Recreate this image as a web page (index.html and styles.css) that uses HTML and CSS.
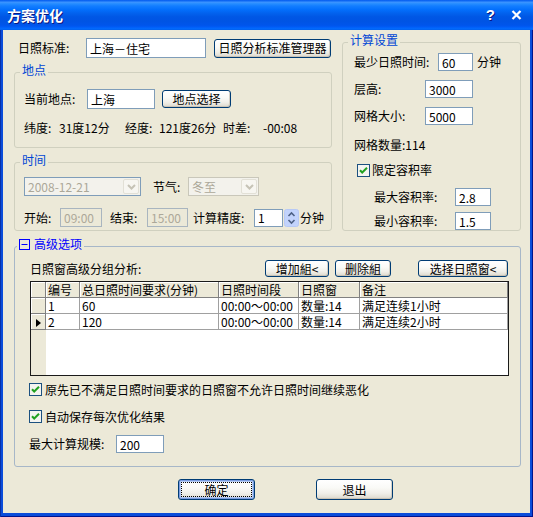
FILE: index.html
```html
<!DOCTYPE html>
<html lang="zh-CN">
<head>
<meta charset="utf-8">
<title>方案优化</title>
<link rel="stylesheet" href="styles.css">
</head>
<body>
<div class="window">
  <div class="titlebar">
    <span class="title">方案优化</span>
    <span class="tb-help">?</span>
    <svg class="tb-close" width="11" height="10" viewBox="0 0 11 10"><path d="M1.5 1L9.5 9M9.5 1L1.5 9" stroke="#fff" stroke-width="2.2" fill="none"/></svg>
  </div>
  <div class="client">
    <div class="top">
      <div class="leftcol">
        <div class="row std-row">
          <span class="lbl w68">日照标准:</span>
          <input class="tb w120 h20" type="text" value="上海－住宅">
          <button class="btn std-btn">日照分析标准管理器</button>
        </div>
        <fieldset class="grp loc">
          <legend>地点</legend>
          <div class="row h20">
            <span class="lbl w63">当前地点:</span>
            <input class="tb w68 h20" type="text" value="上海">
            <button class="btn loc-btn">地点选择</button>
          </div>
          <div class="row coords">
            <span class="w35">纬度:</span>
            <span class="w66">31度12分</span>
            <span class="w34">经度:</span>
            <span class="w64">121度26分</span>
            <span class="w40">时差:</span>
            <span>-00:08</span>
          </div>
        </fieldset>
        <fieldset class="grp time">
          <legend>时间</legend>
          <div class="row h19">
            <div class="combo c1">
              <span class="cval">2008-12-21</span>
              <span class="drop"><svg width="9" height="6" viewBox="0 0 9 6"><path d="M1 1L4.5 4.5L8 1" stroke="#C6C3B6" stroke-width="2" fill="none"/></svg></span>
            </div>
            <span class="lbl jq">节气:</span>
            <div class="combo c2">
              <span class="cval">冬至</span>
              <span class="drop"><svg width="9" height="6" viewBox="0 0 9 6"><path d="M1 1L4.5 4.5L8 1" stroke="#C6C3B6" stroke-width="2" fill="none"/></svg></span>
            </div>
          </div>
          <div class="row h19 trow">
            <span class="lbl w36">开始:</span>
            <input class="tb dis w42 h19" type="text" value="09:00" disabled>
            <span class="lbl w37 ml8">结束:</span>
            <input class="tb dis w41 h19" type="text" value="15:00" disabled>
            <span class="lbl w61 ml5">计算精度:</span>
            <input class="tb w29 h18" type="text" value="1">
            <svg class="spin" width="15" height="18" viewBox="0 0 15 18"><rect x="0.5" y="0.5" width="14" height="17" rx="2" fill="#C2D3FC" stroke="#B7C9F5"/><path d="M4.5 7L7.5 4L10.5 7" stroke="#4D6185" stroke-width="1.6" fill="none"/><path d="M4.5 11L7.5 14L10.5 11" stroke="#4D6185" stroke-width="1.6" fill="none"/></svg>
            <span class="unit">分钟</span>
          </div>
        </fieldset>
      </div>
      <fieldset class="grp calc">
        <legend>计算设置</legend>
        <div class="row h18">
          <span class="lbl w84">最少日照时间:</span>
          <input class="tb w35 h18" type="text" value="60">
          <span class="ml4">分钟</span>
        </div>
        <div class="row h18 mt9">
          <span class="lbl w71">层高:</span>
          <input class="tb w48 h18" type="text" value="3000">
        </div>
        <div class="row h18 mt9">
          <span class="lbl w71">网格大小:</span>
          <input class="tb w48 h18" type="text" value="5000">
        </div>
        <div class="row h14 mt13">网格数量:114</div>
        <div class="row h14 mt11 chkrow">
          <svg class="chk" width="13" height="13" viewBox="0 0 13 13"><rect x="0.5" y="0.5" width="12" height="12" fill="#F4F4F0" stroke="#1C5180"/><path d="M3 6.2L5.2 8.5L10 3.8" stroke="#21A121" stroke-width="2" fill="none"/></svg>
          <span class="chklbl">限定容积率</span>
        </div>
        <div class="row h18 mt11 ratio">
          <span class="lbl w81">最大容积率:</span>
          <input class="tb w36 h18" type="text" value="2.8">
        </div>
        <div class="row h18 mt6 ratio">
          <span class="lbl w81">最小容积率:</span>
          <input class="tb w36 h18" type="text" value="1.5">
        </div>
      </fieldset>
    </div>
    <fieldset class="grp adv">
      <legend><svg class="collapse" width="11" height="11" viewBox="0 0 11 11"><rect x="0.5" y="0.5" width="10" height="10" fill="none" stroke="#0000FF"/><path d="M2.5 5.5H8.5" stroke="#0000FF"/></svg><span class="advtitle">高级选项</span></legend>
      <div class="row h17">
        <span class="lbl w235">日照窗高级分组分析:</span>
        <button class="btn sbtn w64">增加組&lt;</button>
        <button class="btn sbtn w56 ml6">删除組</button>
        <button class="btn sbtn w90 ml27">选择日照窗&lt;</button>
      </div>
      <div class="grid">
        <table>
          <thead>
            <tr>
              <th class="rh"></th>
              <th class="c-no">编号</th>
              <th class="c-total">总日照时间要求(分钟)</th>
              <th class="c-span">日照时间段</th>
              <th class="c-win">日照窗</th>
              <th class="c-note">备注</th>
            </tr>
          </thead>
          <tbody>
            <tr>
              <td class="rh"></td>
              <td>1</td>
              <td>60</td>
              <td>00:00～00:00</td>
              <td>数量:14</td>
              <td>满足连续1小时</td>
            </tr>
            <tr>
              <td class="rh"><svg width="5" height="8" viewBox="0 0 5 8"><path d="M0 0L5 4L0 8Z" fill="#000"/></svg></td>
              <td>2</td>
              <td>120</td>
              <td>00:00～00:00</td>
              <td>数量:14</td>
              <td>满足连续2小时</td>
            </tr>
          </tbody>
        </table>
      </div>
      <div class="row h13 mt7 optrow">
        <svg class="chk" width="13" height="13" viewBox="0 0 13 13"><rect x="0.5" y="0.5" width="12" height="12" fill="#F4F4F0" stroke="#1C5180"/><path d="M3 6.2L5.2 8.5L10 3.8" stroke="#21A121" stroke-width="2" fill="none"/></svg>
        <span class="chklbl">原先已不满足日照时间要求的日照窗不允许日照时间继续恶化</span>
      </div>
      <div class="row h13 mt14 optrow">
        <svg class="chk" width="13" height="13" viewBox="0 0 13 13"><rect x="0.5" y="0.5" width="12" height="12" fill="#F4F4F0" stroke="#1C5180"/><path d="M3 6.2L5.2 8.5L10 3.8" stroke="#21A121" stroke-width="2" fill="none"/></svg>
        <span class="chklbl">自动保存每次优化结果</span>
      </div>
      <div class="row h18 mt12 maxrow">
        <span class="lbl w87">最大计算规模:</span>
        <input class="tb w48 h18" type="text" value="200">
      </div>
    </fieldset>
    <div class="actions">
      <button class="btn act default">确定</button>
      <button class="btn act">退出</button>
    </div>
  </div>
</div>
</body>
</html>
```
FILE: styles.css
```css
* { box-sizing: border-box; }
html, body { margin: 0; padding: 0; }
body {
  font: 12px/14px "Noto Sans CJK SC", "Noto Sans", sans-serif;
  color: #000;
  background: #fff;
}
.window {
  width: 533px;
  height: 517px;
  display: flex;
  flex-direction: column;
  background: #0A4CDA;
  box-shadow: inset 1px 0 0 #0831A8, inset -1px 0 0 #00138C, inset 0 -1px 0 #00138C;
}
.titlebar {
  height: 30px;
  flex: none;
  display: flex;
  align-items: center;
  padding: 0 11px 0 7px;
  background: linear-gradient(180deg, #0058EE 0%, #3A93FF 8%, #288EFF 12%, #127DFF 20%, #036FFC 32%, #0262EE 44%, #0057E5 56%, #0054E3 70%, #0055EB 84%, #005BF5 90%, #026AFE 94%, #0062EF 100%);
  color: #fff;
}
.title {
  font: bold 14px/30px "Noto Sans CJK SC", sans-serif;
  text-shadow: 1px 1px 0 #0A1883;
  flex: 1;
}
.tb-help {
  font: bold 15px/30px "Liberation Sans", sans-serif;
  text-shadow: 1px 1px 0 #0A1883;
  margin-right: 16px;
}
.tb-close { display: block; }
.client {
  flex: 1;
  margin: 0 3px 4px;
  background: #ECE9D8;
  padding: 4px 9px 0 11px;
}
.top { display: flex; gap: 10px; align-items: stretch; }
.leftcol { width: 318px; display: flex; flex-direction: column; }
.row { display: flex; align-items: center; white-space: nowrap; }
.std-row { margin-top: 4px; height: 20px; padding-left: 4px; }
.lbl { flex: none; }

.tb {
  font: 12px/14px "Noto Sans CJK SC", "Noto Sans", sans-serif;
  color: #000;
  border: 1px solid #7F9DB9;
  background: #fff;
  padding: 0 0 0 3px;
  margin: 0;
  outline: none;
  flex: none;
}
.tb.dis {
  background: #ECE9D8;
  border-color: #A9B5BF;
  color: #ACA899;
}
.btn {
  font: 12px/14px "Noto Sans CJK SC", "Noto Sans", sans-serif;
  color: #000;
  margin: 0;
  padding: 0;
  border: 1px solid #003C74;
  border-radius: 3px;
  background: linear-gradient(180deg, #FFFFFF 0%, #FAFAF7 40%, #F0EFE9 70%, #E3E0D6 90%, #D6D0C5 100%);
  box-shadow: inset -1px -1px 0 rgba(190,184,168,0.6);
  flex: none;
}
.std-btn { width: 117px; height: 19px; margin-left: 8px; }
.loc-btn { width: 69px; height: 18px; margin-left: 7px; }
.sbtn { height: 17px; }

.grp {
  margin: 0;
  padding: 0;
  border: 1px solid #D0D0BF;
  border-radius: 3px;
  min-width: 0;
}
.grp > legend {
  padding: 0 2px 4px;
  font-size: 12px;
  line-height: 12px;
  color: #0046D5;
}
.loc { margin-top: 6px; padding: 9px 0 12px 9px; }
.loc > legend, .time > legend { margin-left: -4px; }
.coords { margin-top: 12px; height: 14px; }
.time { margin-top: 6px; flex: 1; padding: 7px 0 0 9px; }
.trow { margin-top: 12px; }
.combo {
  display: flex;
  align-items: center;
  height: 19px;
  border: 1px solid #7F9DB9;
  background: #F3F2EC;
  color: #ACA899;
  padding: 0 1px 0 3px;
  flex: none;
}
.c1 { width: 117px; }
.c2 { width: 71px; border-color: #C9C7BA; }
.cval { flex: 1; }
.drop {
  width: 16px;
  height: 15px;
  border: 1px solid #E2E0D6;
  border-radius: 2px;
  background: #F7F6F1;
  display: flex;
  align-items: center;
  justify-content: center;
}
.drop svg { display: block; }
.jq { width: 35px; margin-left: 12px; }
.spin { display: block; margin-left: 1px; flex: none; }
.unit { margin-left: 1px; }

.calc { flex: 1; padding: 3px 0 0 11px; }
.calc > legend { margin-left: -6px; }
.chkrow { padding-left: 3px; }
.chk { display: block; flex: none; }
.chkrow .chklbl { margin-left: 2px; }
.ratio { padding-left: 20px; }

.adv {
  margin-top: 7px;
  padding: 6px 0 13px 15px;
  border-color: #A7B7C8;
}
.adv > legend {
  margin-left: -13px;
  color: #0000FF;
  display: flex;
  align-items: center;
}
.collapse { display: block; margin-top: 1px; }
.advtitle { margin-left: 4px; }
.grid {
  margin-top: 4px;
  width: 479px;
  height: 95px;
  border: 1px solid #1A1A1A;
  background: linear-gradient(90deg, #ECE9D8 15px, #fff 15px);
  overflow: hidden;
}
.grid table {
  border-collapse: separate;
  border-spacing: 0;
  table-layout: fixed;
  width: 477px;
}
.grid th, .grid td {
  height: 16px;
  padding: 0 0 0 2px;
  font-weight: normal;
  text-align: left;
  white-space: nowrap;
  overflow: hidden;
  line-height: 15px;
}
.grid th {
  background: #ECE9D8;
  border-right: 1px solid #808080;
  border-bottom: 1px solid #808080;
  box-shadow: inset 1px 1px 0 #fff;
}
.grid td {
  background: #fff;
  border-right: 1px solid #A0A0A0;
  border-bottom: 1px solid #A0A0A0;
}
.grid .rh {
  width: 15px;
  padding: 0;
  background: #ECE9D8;
  border-right: 1px solid #808080;
  border-bottom: 1px solid #808080;
  box-shadow: inset 1px 1px 0 #fff;
  text-align: center;
}
.grid td.rh svg { display: inline-block; vertical-align: middle; margin-top: -1px; }
.c-no { width: 34px; }
.c-total { width: 139px; }
.c-span { width: 80px; }
.c-win { width: 61px; }
.c-note { width: 148px; }
.optrow { margin-left: -1px; }
.optrow .chklbl { margin-left: 3px; }
.maxrow { margin-left: -1px; }

.actions {
  margin-top: 12px;
  padding-left: 164px;
  display: flex;
  gap: 61px;
}
.act { width: 77px; height: 21px; }
.act.default {
  border-color: #003C74;
  box-shadow: inset 0 0 0 1px #7A9CE0, inset 0 0 0 2px #B6CBF3;
  outline: 1px dotted #000;
  outline-offset: -4px;
}

/* sizing and spacing utilities (kept last so they win) */
.h13 { height: 13px; } .h14 { height: 14px; } .h17 { height: 17px; }
.h18 { height: 18px; } .h19 { height: 19px; } .h20 { height: 20px; }
.w29 { width: 29px; } .w34 { width: 34px; } .w35 { width: 35px; } .w36 { width: 36px; }
.w37 { width: 37px; } .w40 { width: 40px; } .w41 { width: 41px; } .w42 { width: 42px; }
.w48 { width: 48px; } .w56 { width: 56px; } .w61 { width: 61px; } .w63 { width: 63px; }
.w64 { width: 64px; } .w66 { width: 66px; } .w68 { width: 68px; } .w71 { width: 71px; }
.w81 { width: 81px; } .w84 { width: 84px; } .w87 { width: 87px; } .w90 { width: 90px; }
.w120 { width: 120px; } .w235 { width: 235px; }
.ml4 { margin-left: 4px; } .ml5 { margin-left: 5px; } .ml6 { margin-left: 6px; }
.ml8 { margin-left: 8px; } .ml27 { margin-left: 27px; }
.mt6 { margin-top: 6px; } .mt7 { margin-top: 7px; } .mt9 { margin-top: 9px; }
.mt11 { margin-top: 11px; } .mt12 { margin-top: 12px; } .mt13 { margin-top: 13px; }
.mt14 { margin-top: 14px; }
```
